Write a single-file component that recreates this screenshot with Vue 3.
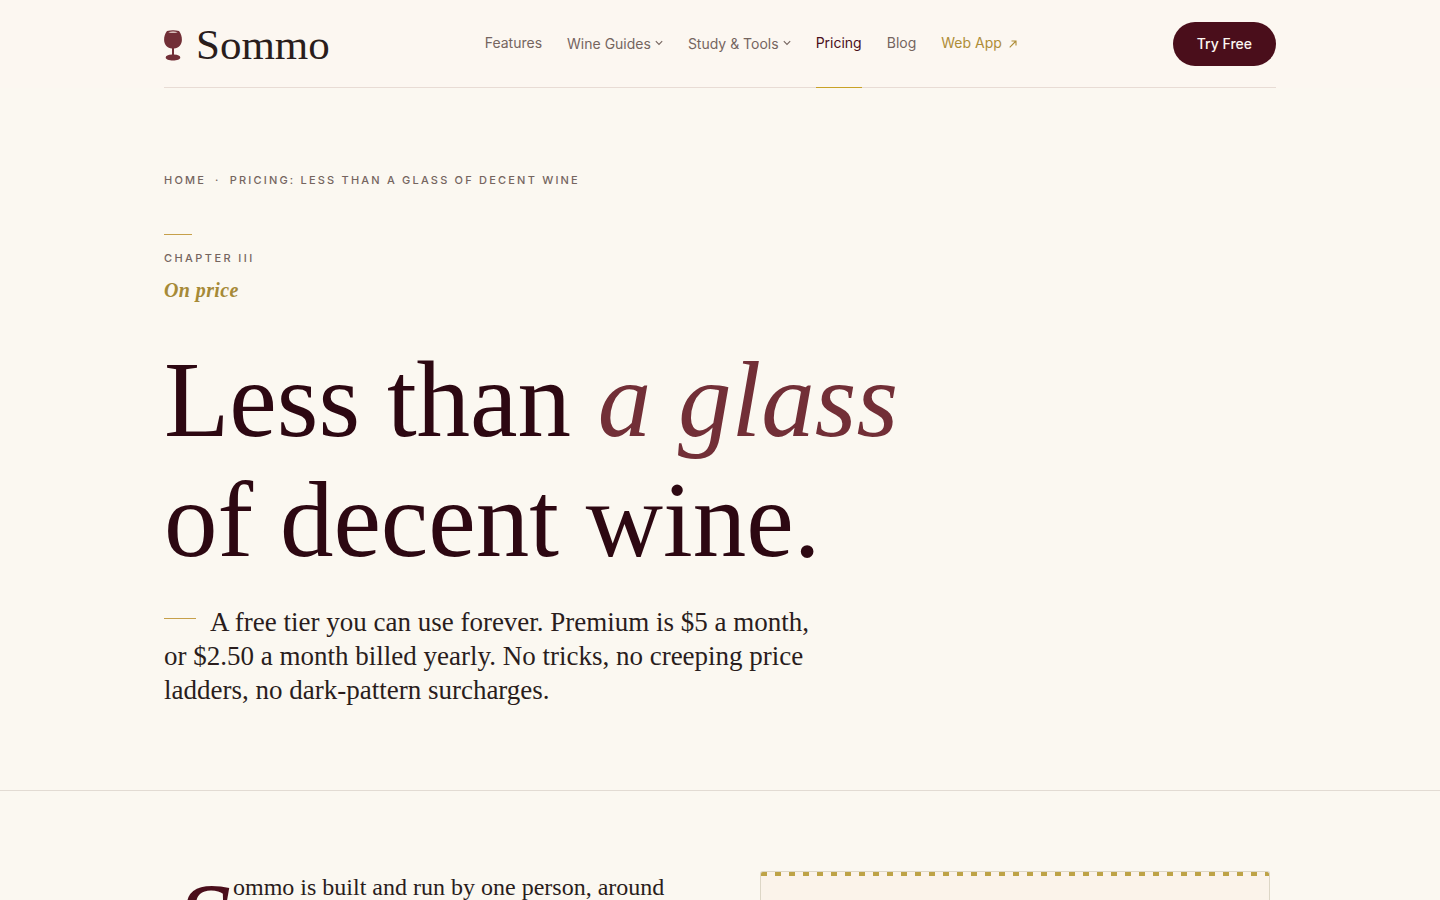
<script setup>
const links = [
  { label: 'Features' },
  { label: 'Wine Guides', menu: true },
  { label: 'Study & Tools', menu: true },
  { label: 'Pricing', active: true },
  { label: 'Blog' },
  { label: 'Web App', external: true },
]
</script>

<template>
  <div class="page">
    <header class="site-header">
      <div class="container">
        <div class="bar">
          <a class="brand" href="#">
            <svg class="glass" viewBox="0 0 20 32" aria-hidden="true">
              <path d="M4 2Q10 .6 16 2C18 4.500 19 7.500 18.900 11C18.800 16 15.500 19 11 19.500V25.500C15 25.700 17.300 26.700 17.300 28.400C17.300 30.400 14 31.400 10 31.400S2.700 30.400 2.700 28.400C2.700 26.700 5 25.700 9 25.500V19.500C4.500 19 1.200 16 1.100 11C1 7.500 2 4.500 4 2Z" fill="#722f37" />
              <path d="M5.200 3.200Q10 1.700 14.800 3.200Q10 4.500 5.200 3.200Z" fill="#f6ebe3" />
            </svg>
            <span>Sommo</span>
          </a>
          <nav class="nav" aria-label="Main">
            <template v-for="link in links" :key="link.label">
              <button v-if="link.menu" class="item menu" type="button">
                {{ link.label }}
                <svg class="chevron" viewBox="0 0 8 6" aria-hidden="true"><path d="M.8 1.200 4 4.400 7.200 1.200" /></svg>
              </button>
              <a v-else class="item" :class="{ active: link.active, external: link.external }" href="#">
                {{ link.label }}
                <svg v-if="link.external" class="arrow" viewBox="0 0 8 8" aria-hidden="true"><path d="M.7 7.300 7 1M2.500 1H7V5.500" /></svg>
              </a>
            </template>
          </nav>
          <a class="cta" href="#">Try Free</a>
        </div>
      </div>
    </header>

    <section class="hero">
      <div class="container">
        <nav class="crumbs" aria-label="Breadcrumb">
          <a href="#">Home</a><span class="dot">·</span><span>Pricing: Less than a glass of decent wine</span>
        </nav>
        <div class="chapter">Chapter III</div>
        <p class="topic">On price</p>
        <h1>Less than <em>a glass</em><br>of decent wine.</h1>
        <p class="lede">A free tier you can use forever. Premium is $5 a month,<br>or $2.50 a month billed yearly. No tricks, no creeping price<br>ladders, no dark-pattern surcharges.</p>
      </div>
    </section>

    <section class="story">
      <div class="container columns">
        <p class="intro">Sommo is built and run by one person, around</p>
        <aside class="card"></aside>
      </div>
    </section>
  </div>
</template>

<style>
body {
  margin: 0;
  background: #fbf8f1;
}
</style>

<style scoped>
.page {
  display: flex;
  flex-direction: column;
  height: 100vh;
  overflow: hidden;
  background: #fbf8f1;
  color: #2a1d1c;
  font-family: Inter, "Liberation Sans", sans-serif;
}
.container {
  box-sizing: border-box;
  width: 100%;
  max-width: 1240px;
  margin: 0 auto;
  padding: 0 64px;
}
a {
  color: inherit;
  text-decoration: none;
}
.site-header {
  flex: none;
  background: #fcf7f1;
}
.bar {
  display: flex;
  align-items: center;
  justify-content: space-between;
  height: 87px;
  border-bottom: 1px solid #e8dcd5;
}
.brand {
  display: flex;
  align-items: center;
  gap: 13px;
  padding-top: 2px;
  font-family: "Liberation Serif", serif;
  font-size: 43px;
  line-height: 48px;
}
.glass {
  width: 20px;
  height: 32px;
  margin-left: -1px;
}
.nav {
  display: flex;
  align-self: stretch;
  gap: 25px;
}
.item {
  display: flex;
  align-items: center;
  margin: 0 0 -1px;
  padding: 0 0 1px;
  border: 0;
  border-bottom: 1px solid transparent;
  background: none;
  color: #75655f;
  font: 14px/20px Inter, "Liberation Sans", sans-serif;
}
.menu {
  gap: 4px;
  padding: 0;
}
.chevron {
  width: 8px;
  height: 6px;
  margin-bottom: 2px;
}
.arrow {
  width: 8px;
  height: 8px;
  margin: 2px 1px 0 0;
}
.chevron path,
.arrow path {
  fill: none;
  stroke: currentColor;
  stroke-width: 1.1;
}
.item.active {
  border-bottom-color: #c9a227;
  color: #4a0e1b;
}
.item.external {
  gap: 7px;
  color: #ae8d37;
}
.cta {
  padding: 12px 24px;
  border-radius: 22px;
  background: #4a0e1b;
  color: #fcf7f1;
  font-size: 14px;
  font-weight: 500;
  line-height: 20px;
}
.hero {
  flex: none;
  padding: 84px 0 83px;
  border-bottom: 1px solid #e2dbd3;
}
.crumbs,
.chapter {
  color: #75655f;
  font-size: 11px;
  font-weight: 500;
  line-height: 16px;
  letter-spacing: 0.2em;
  text-transform: uppercase;
}
.dot {
  margin: 0 9px;
}
.chapter {
  letter-spacing: 0.22em;
}
.chapter::before {
  display: block;
  width: 28px;
  height: 1px;
  margin: 46px 0 15px;
  background: #c6a04a;
  content: "";
}
.topic {
  margin: 12px 0 0;
  color: #a68a37;
  font: italic bold 20px/24px "Liberation Serif", serif;
  letter-spacing: 0.02em;
}
h1 {
  margin: 38px 0 0;
  color: #2d0812;
  font: 400 107px/120px "Liberation Serif", serif;
}
h1 em {
  color: #722f37;
}
.lede {
  margin: 25px 0 0;
  font: 27px/34px "Liberation Serif", serif;
}
.lede::before {
  display: inline-block;
  width: 32px;
  height: 1px;
  margin: 0 14px 12px 0;
  background: #c6a04a;
  vertical-align: baseline;
  content: "";
}
.story {
  display: flex;
  flex: 1;
  min-height: 0;
  overflow: hidden;
}
.columns {
  display: grid;
  grid-template-columns: 1fr 510px;
  gap: 80px;
  padding: 80px 70px 0 64px;
}
.intro {
  margin: 0;
  font: 24px/32px "Liberation Serif", serif;
}
.intro::first-letter {
  float: left;
  padding-right: 2px;
  padding-left: 12px;
  color: #4a0e1b;
  font-size: 110px;
  font-style: italic;
  line-height: 102px;
}
.card {
  border: 1px solid #ddd6c6;
  border-bottom: 0;
  border-radius: 3px 3px 0 0;
  background: repeating-linear-gradient(90deg, #bea347 0 6px, transparent 6px 14px) 0 0 / 100% 4px no-repeat #fbf3ea;
}
</style>
